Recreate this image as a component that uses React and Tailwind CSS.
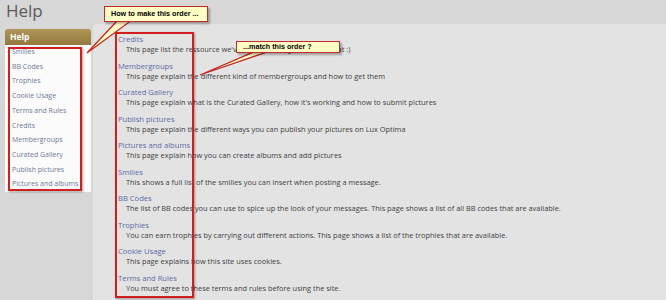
import React from 'react';

const sideLinks = [
  'Smilies', 'BB Codes', 'Trophies', 'Cookie Usage', 'Terms and Rules',
  'Credits', 'Membergroups', 'Curated Gallery', 'Publish pictures', 'Pictures and albums',
];

const helpPages = [
  { title: 'Credits', text: "This page list the ressource we've used here, big thanks for that :)" },
  { title: 'Membergroups', text: 'This page explain the different kind of membergroups and how to get them' },
  { title: 'Curated Gallery', text: "This page explain what is the Curated Gallery, how it's working and how to submit pictures" },
  { title: 'Publish pictures', text: 'This page explain the different ways you can publish your pictures on Lux Optima' },
  { title: 'Pictures and albums', text: 'This page explain how you can create albums and add pictures' },
  { title: 'Smilies', text: 'This shows a full list of the smilies you can insert when posting a message.' },
  { title: 'BB Codes', text: 'The list of BB codes you can use to spice up the look of your messages. This page shows a list of all BB codes that are available.' },
  { title: 'Trophies', text: 'You can earn trophies by carrying out different actions. This page shows a list of the trophies that are available.' },
  { title: 'Cookie Usage', text: 'This page explains how this site uses cookies.' },
  { title: 'Terms and Rules', text: 'You must agree to these terms and rules before using the site.' },
];

const Callout = ({ className, children }) => (
  <div
    className={`absolute bg-[#ffffc6] border-[1.5px] border-[#c42a2a] shadow-[2px_2px_2px_rgba(0,0,0,0.3)] flex items-center pl-[6px] text-[7.2px] font-bold text-black leading-none ${className}`}
    style={{ fontFamily: '"Liberation Sans", Arial, sans-serif' }}
  >
    {children}
  </div>
);

export default function App() {
  return (
    <div
      className="relative w-[666px] h-[300px] overflow-hidden bg-[#d7d7d7] flex flex-col"
      style={{ fontFamily: '"Open Sans", sans-serif' }}
    >
      {/* Page title */}
      <div className="h-[24px] shrink-0 pl-[6px] text-[17px] leading-[22px] text-[#5a5a5a]">Help</div>

      <div className="flex flex-1 min-h-0">
        {/* Sidebar */}
        <aside className="ml-[5px] pt-[5px] w-[86px] shrink-0">
          <div className="h-[16px] rounded-t-[3px] bg-gradient-to-b from-[#ad9558] to-[#94793d] pl-[5px] text-[8.5px] leading-[16px] font-bold text-white">
            Help
          </div>
          <ul className="bg-[#fbfbfb] pl-[7px]">
            {sideLinks.map((l) => (
              <li key={l} className="text-[7px] leading-[14.7px] text-[#6f7a98] whitespace-nowrap">{l}</li>
            ))}
          </ul>
        </aside>

        {/* Main panel */}
        <main className="ml-[2px] flex-1 bg-[#e3e3e3] rounded-tl-[4px] pt-[10px] pl-[25px]">
          {helpPages.map((p) => (
            <div key={p.title} className="mb-[6.55px]">
              <div className="text-[7.6px] leading-[10px] text-[#5d6aa6]">{p.title}</div>
              <div className="pl-[8px] text-[7.4px] leading-[10px] text-[#3e3e3e] whitespace-nowrap">{p.text}</div>
            </div>
          ))}
        </main>
      </div>

      {/* Annotation frames */}
      <div className="absolute left-[8px] top-[47px] w-[74px] h-[144px] border-2 border-[#cf1f1f] shadow-[1px_1px_2px_rgba(0,0,0,0.35)]" />
      <div className="absolute left-[115px] top-[32px] w-[79px] h-[266px] border-2 border-[#cf1f1f] shadow-[1px_1px_2px_rgba(0,0,0,0.35)]" />

      {/* Callout tails */}
      <svg className="absolute left-0 top-0" width="666" height="300">
        <polygon points="118,20 132,20 87,53" fill="#ffffc6" stroke="#c42a2a" strokeWidth="1.3" />
        <polygon points="256,51 270,51 200,75" fill="#ffffc6" stroke="#c42a2a" strokeWidth="1.3" />
      </svg>

      <Callout className="left-[104px] top-[6px] w-[104px] h-[16px]">How to make this order ...</Callout>
      <Callout className="left-[236px] top-[41px] w-[104px] h-[12px]">...match this order ?</Callout>
    </div>
  );
}
